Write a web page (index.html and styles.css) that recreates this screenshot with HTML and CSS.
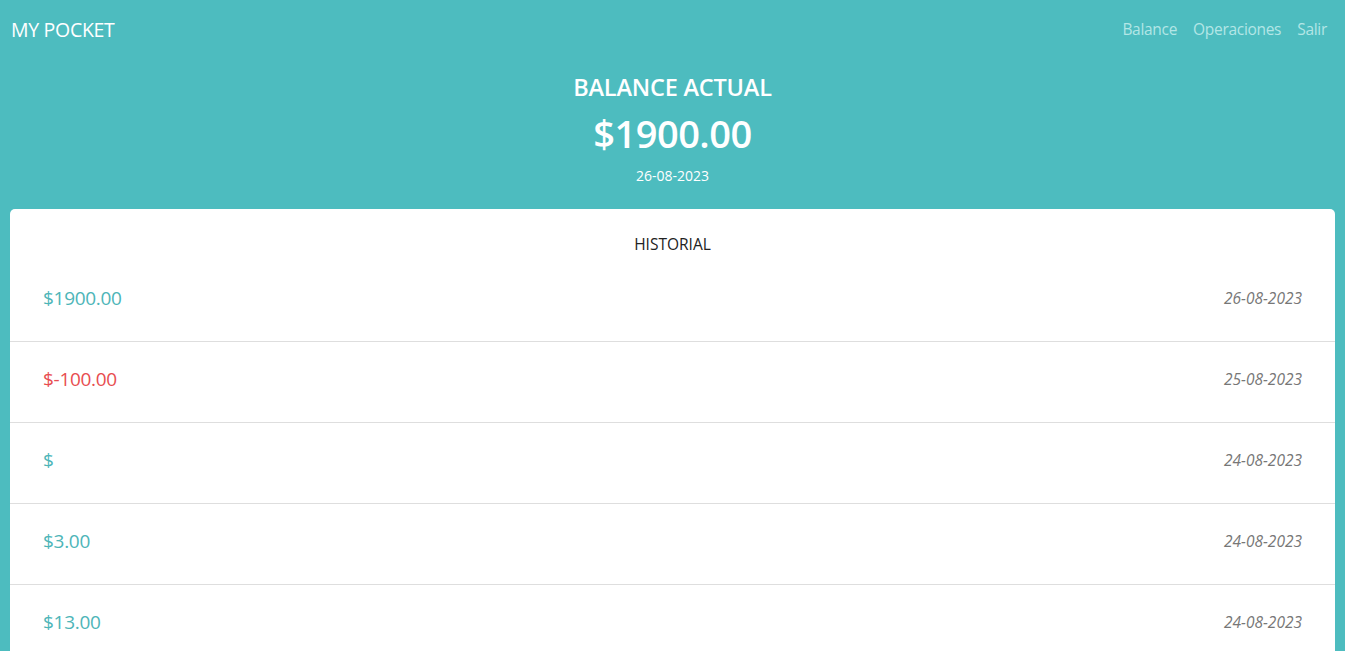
FILE: index.html
```html
<!DOCTYPE html>
<html lang="es">
<head>
<meta charset="utf-8">
<title>My Pocket</title>
<link rel="stylesheet" href="styles.css">
</head>
<body>
<nav class="navbar">
  <a class="brand" href="#">MY POCKET</a>
  <ul class="nav-links">
    <li><a href="#">Balance</a></li>
    <li><a href="#">Operaciones</a></li>
    <li><a href="#">Salir</a></li>
  </ul>
</nav>
<header class="hero">
  <h1 class="hero-title">BALANCE ACTUAL</h1>
  <p class="hero-amount">$1900.00</p>
  <p class="hero-date">26-08-2023</p>
</header>
<main class="card">
  <h2 class="card-title">HISTORIAL</h2>
  <ul class="history">
    <li class="row"><span class="amount">$1900.00</span><span class="date">26-08-2023</span></li>
    <li class="row"><span class="amount neg">$-100.00</span><span class="date">25-08-2023</span></li>
    <li class="row"><span class="amount">$</span><span class="date">24-08-2023</span></li>
    <li class="row"><span class="amount">$3.00</span><span class="date">24-08-2023</span></li>
    <li class="row"><span class="amount">$13.00</span><span class="date">24-08-2023</span></li>
  </ul>
</main>
</body>
</html>
```

FILE: styles.css
```css
* { box-sizing: border-box; }
html, body {
  margin: 0;
  padding: 0;
  background: #4dbcbf;
  font-family: "Open Sans", "Noto Sans", sans-serif;
  overflow: hidden;
}
.navbar {
  display: flex;
  align-items: center;
  justify-content: space-between;
  height: 58px;
  padding: 0 18px 0 11px;
}
.brand {
  color: #ffffff;
  font-size: 19.5px;
  text-decoration: none;
  letter-spacing: -0.3px;
}
.nav-links {
  display: flex;
  list-style: none;
  margin: 0;
  padding: 0;
  gap: 16px;
}
.nav-links a {
  color: #b3e6e6;
  text-decoration: none;
  font-size: 15.5px;
  letter-spacing: -0.3px;
}
.hero {
  display: flex;
  flex-direction: column;
  align-items: center;
  color: #fff;
  padding-top: 13px;
  height: 151px;
}
.hero-title {
  margin: 0;
  font-size: 23.5px;
  font-weight: 600;
  line-height: 32px;
  letter-spacing: -0.2px;
}
.hero-amount {
  margin: 6px 0 0;
  font-size: 38px;
  font-weight: 600;
  line-height: 48px;
  letter-spacing: -0.5px;
}
.hero-date {
  margin: 10px 0 0;
  font-size: 14px;
  line-height: 18px;
}
.card {
  margin: 0 10px;
  background: #fff;
  border-radius: 5px;
  padding-top: 25px;
  min-height: 460px;
}
.card-title {
  margin: 0;
  text-align: center;
  font-size: 15.5px;
  font-weight: 500;
  color: #222;
  line-height: 20px;
  height: 27px;
}
.history {
  list-style: none;
  margin: 0;
  padding: 0;
}
.row {
  display: flex;
  align-items: center;
  justify-content: space-between;
  height: 81px;
  padding: 0 33px 6px 33px;
  border-bottom: 1px solid #dedede;
}
.amount {
  color: #4db5b8;
  font-size: 19px;
  font-weight: 500;
  letter-spacing: -0.3px;
}
.amount.neg { color: #e84d50; }
.date {
  color: #777;
  font-style: italic;
  font-size: 15.5px;
  font-weight: 400;
}
```
